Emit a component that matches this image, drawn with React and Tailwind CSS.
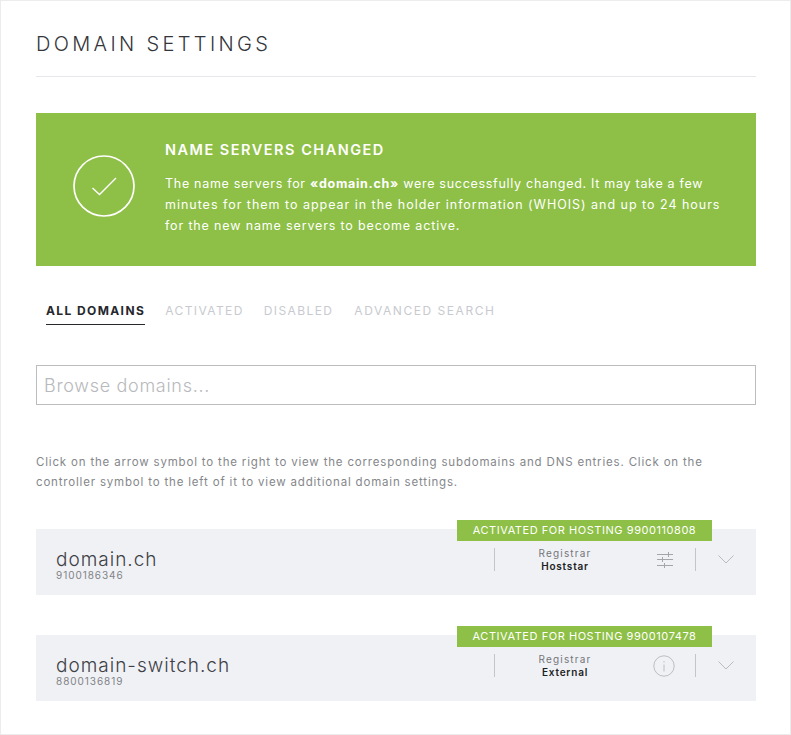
import React from 'react';

function SlidersIcon() {
  return (
    <svg width="18" height="17" viewBox="0 0 18 17" fill="none" stroke="#a3a5a9" strokeWidth="1">
      <path d="M1 3.5h16M1 8.5h16M1 14.5h16M12.5 1v5M6.5 6v5M8.5 12v5" />
    </svg>
  );
}

function InfoIcon() {
  return (
    <svg className="mr-[3px] mt-[1px]" width="22" height="22" viewBox="0 0 22 22" fill="none" stroke="#bcbec2" strokeWidth="1">
      <circle cx="11" cy="11" r="10.2" />
      <path d="M11 9.5v7M11 6v1.5" />
    </svg>
  );
}

function Chevron() {
  return (
    <svg width="16" height="9" viewBox="0 0 16 9" fill="none" stroke="#b9bbbf" strokeWidth="1">
      <path d="M0.5 0.5L8 8L15.5 0.5" />
    </svg>
  );
}

function DomainRow({ name, number, hosting, registrar, icon, className }) {
  return (
    <div className={`relative h-[66px] bg-[#f0f1f5] pl-5 pb-[5px] flex items-center ${className}`}>
      <div className="absolute left-[421px] -top-[9px] w-[255px] h-[21px] bg-[#8ebf46] text-white text-[11px] tracking-[0.55px] flex items-center justify-center">
        ACTIVATED FOR HOSTING {hosting}
      </div>
      <div className="flex-1 pt-[12px]">
        <div className="text-[19px] leading-[20px] tracking-[1px] font-light text-[#3d4046]">{name}</div>
        <div className="text-[10px] leading-[11px] tracking-[0.95px] text-[#808286]">{number}</div>
      </div>
      <div className="w-px h-[23px] bg-[#c4c5c9]" />
      <div className="w-[140px] text-center">
        <div className="text-[10px] leading-[13px] tracking-[1.2px] text-[#74767a]">Registrar</div>
        <div className="text-[10px] leading-[13px] tracking-[0.8px] font-semibold text-[#1d1f24]">{registrar}</div>
      </div>
      <div className="w-[60px] h-[23px] flex items-center justify-center">{icon}</div>
      <div className="w-px h-[23px] bg-[#c4c5c9]" />
      <div className="w-[60px] flex justify-center">
        <Chevron />
      </div>
    </div>
  );
}

export default function App() {
  return (
    <div className="h-[735px] border border-[#ececec] pl-[35px] pr-[34px] bg-white font-['Inter',sans-serif] overflow-hidden">
      <div className="h-[76px] border-b border-[#e6e7ea] pt-[29px]">
        <h1 className="text-[20px] leading-[28px] tracking-[3.35px] font-light text-[#33353a]">DOMAIN SETTINGS</h1>
      </div>

      {/* success banner */}
      <div className="mt-[36px] h-[153px] bg-[#8ebf46] flex text-white">
        <div className="w-[129px] flex justify-center items-center pl-[7px] pb-[7px]">
          <svg width="62" height="62" viewBox="0 0 62 62" fill="none" stroke="white">
            <circle cx="31" cy="31" r="30" strokeWidth="1.7" />
            <path d="M19.5 33L26.5 39.5L43 23" strokeWidth="1.4" />
          </svg>
        </div>
        <div className="pt-[28px]">
          <h2 className="text-[14.5px] leading-[18px] tracking-[1.5px] font-semibold">NAME SERVERS CHANGED</h2>
          <p className="mt-[14px] text-[12.5px] leading-[21px] whitespace-nowrap">
            <span className="block tracking-[0.71px]">
              The name servers for <b className="font-bold">«domain.ch»</b> were successfully changed. It may take a few
            </span>
            <span className="block tracking-[0.98px]">
              minutes for them to appear in the holder information (WHOIS) and up to 24 hours
            </span>
            <span className="block tracking-[0.85px]">for the new name servers to become active.</span>
          </p>
        </div>
      </div>

      {/* tabs */}
      <div className="mt-[32px] ml-[10px] h-[27px] flex gap-[20px] text-[12px] leading-[26px] tracking-[1.4px] text-[#c8cad0]">
        <div className="h-[27px] border-b border-[#26282c] font-bold text-[#26282c]">ALL DOMAINS</div>
        <div>ACTIVATED</div>
        <div>DISABLED</div>
        <div className="ml-[1px] tracking-[1.55px]">ADVANCED SEARCH</div>
      </div>

      <div className="mt-[40px] h-[40px] border border-[#bcbcbc] flex items-center pl-[7px] text-[18px] tracking-[0.7px] font-light text-[#b8b9bc]">
        Browse domains...
      </div>

      <p className="mt-[47px] text-[11.5px] leading-[20px] tracking-[0.82px] text-[#85878b] whitespace-nowrap">
        Click on the arrow symbol to the right to view the corresponding subdomains and DNS entries. Click on the
        <br />
        controller symbol to the left of it to view additional domain settings.
      </p>

      <DomainRow className="mt-[37px]" name="domain.ch" number="9100186346" hosting="9900110808" registrar="Hoststar" icon={<SlidersIcon />} />
      <DomainRow className="mt-[40px]" name="domain-switch.ch" number="8800136819" hosting="9900107478" registrar="External" icon={<InfoIcon />} />
    </div>
  );
}
